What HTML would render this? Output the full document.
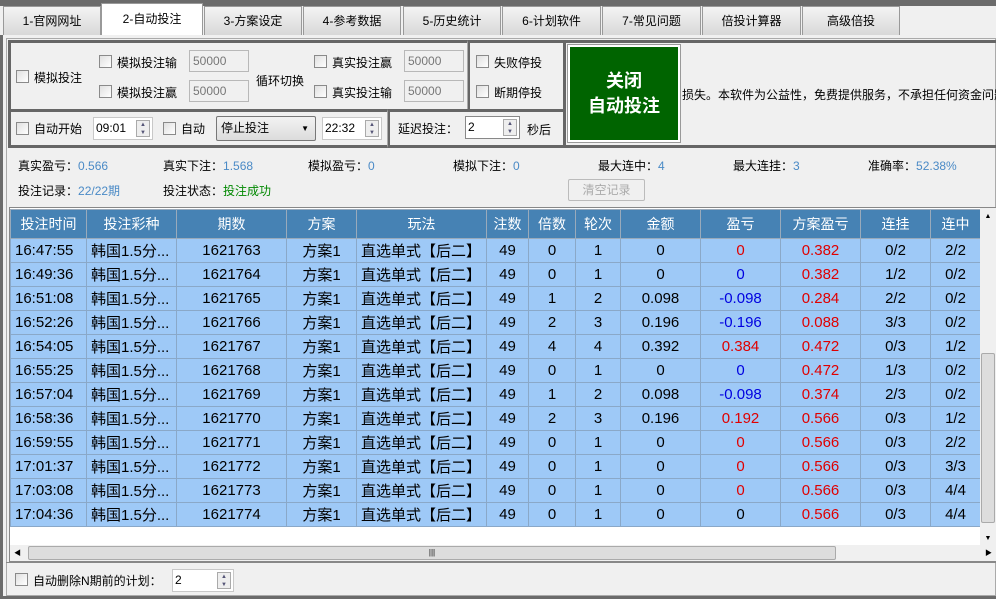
<!DOCTYPE html><html><head><meta charset="utf-8"><style>
*{margin:0;padding:0;box-sizing:border-box}
body{width:996px;height:599px;overflow:hidden;background:#f0f0f0;font-family:"Liberation Sans","Noto Sans CJK SC",sans-serif;font-size:12px;color:#000;position:relative}
.a{position:absolute}
.tab{position:absolute;top:6px;height:29px;background:linear-gradient(#f4f4f4,#d8d8d8);border:1px solid #999;border-bottom:none;text-align:center;line-height:28px;font-size:12px}
.cb{position:absolute;width:13px;height:13px;border:1px solid #8a8a8a;background:linear-gradient(135deg,#e0e0e0,#fff)}
.inp{position:absolute;height:22px;border:1px solid #b8b8b8;background:#f0f0f0;color:#777;line-height:20px;padding-left:3px;font-size:12px}
.box{position:absolute;border:3px solid #666}
.w{position:absolute;height:23px;border:1px solid #c8c8c8;background:#fff;line-height:21px;padding-left:2px}
.sp{position:absolute;right:2px;top:2px;width:14px;height:17px;border:1px solid #aaa;background:#eee;font-size:6px;line-height:8px;text-align:center;color:#557}
.blue{color:#4a8ac6}
table{position:absolute;left:10px;top:209px;border-collapse:collapse;table-layout:fixed}
td,th{border:1px solid #8aa8c8;height:24px;font-size:15px;text-align:center;white-space:nowrap;overflow:hidden;font-weight:normal}
th{background:#4682b4;color:#fff;height:29px;font-size:14px;border-color:#9ab}
td{background:#9ec9f7}
td:nth-child(1),td:nth-child(2),td:nth-child(5){text-align:left;padding-left:4px}
.r{color:#e00000}.b{color:#0000e0}
</style></head><body>
<div class="a" style="left:0;top:0;width:996px;height:6px;background:#6b6b6b"></div>
<div class="tab" style="left:3px;width:98px">1-官网网址</div>
<div class="tab" style="left:101px;width:102px;top:3px;height:33px;background:#fff;line-height:30px">2-自动投注</div>
<div class="tab" style="left:204px;width:98px">3-方案设定</div>
<div class="tab" style="left:303px;width:98px">4-参考数据</div>
<div class="tab" style="left:403px;width:98px">5-历史统计</div>
<div class="tab" style="left:502px;width:99px">6-计划软件</div>
<div class="tab" style="left:602px;width:99px">7-常见问题</div>
<div class="tab" style="left:702px;width:99px">倍投计算器</div>
<div class="tab" style="left:802px;width:98px">高级倍投</div>
<div class="a" style="left:0;top:35px;width:996px;height:564px;border-left:3px solid #6b6b6b;border-bottom:3px solid #6b6b6b;background:#f0f0f0"></div>
<div class="a" style="left:6px;top:38px;width:990px;height:558px;border:1px solid #aaa"></div>
<div class="box" style="left:8px;top:40px;width:462px;height:72px"></div>
<div class="box" style="left:467px;top:40px;width:99px;height:72px;border-left:1px solid #aaa"></div>
<div class="box" style="left:8px;top:109px;width:382px;height:39px"></div>
<div class="box" style="left:387px;top:109px;width:179px;height:39px;border-left:1px solid #aaa"></div>
<div class="box" style="left:563px;top:40px;width:433px;height:108px;border-right:none"></div>
<div class="cb" style="left:16px;top:70px"></div><div class="a" style="left:34px;top:69px">模拟投注</div>
<div class="cb" style="left:99px;top:55px"></div><div class="a" style="left:117px;top:54px">模拟投注输</div>
<div class="cb" style="left:99px;top:85px"></div><div class="a" style="left:117px;top:84px">模拟投注赢</div>
<div class="inp" style="left:189px;top:50px;width:60px">50000</div>
<div class="inp" style="left:189px;top:80px;width:60px">50000</div>
<div class="a" style="left:256px;top:72px">循环切换</div>
<div class="cb" style="left:314px;top:55px"></div><div class="a" style="left:332px;top:54px">真实投注赢</div>
<div class="cb" style="left:314px;top:85px"></div><div class="a" style="left:332px;top:84px">真实投注输</div>
<div class="inp" style="left:404px;top:50px;width:60px">50000</div>
<div class="inp" style="left:404px;top:80px;width:60px">50000</div>
<div class="cb" style="left:476px;top:55px"></div><div class="a" style="left:494px;top:54px">失败停投</div>
<div class="cb" style="left:476px;top:85px"></div><div class="a" style="left:494px;top:84px">断期停投</div>
<div class="cb" style="left:16px;top:122px"></div><div class="a" style="left:34px;top:120px">自动开始</div>
<div class="w" style="left:93px;top:117px;width:60px">09:01<div class="sp">▲<br>▼</div></div>
<div class="cb" style="left:163px;top:122px"></div><div class="a" style="left:181px;top:120px">自动</div>
<div class="a" style="left:216px;top:116px;width:100px;height:25px;border:1px solid #777;border-radius:2px;background:linear-gradient(#f2f2f2,#dcdcdc);line-height:23px;padding-left:4px">停止投注<span style="position:absolute;right:6px;font-size:8px">▼</span></div>
<div class="w" style="left:322px;top:117px;width:60px">22:32<div class="sp">▲<br>▼</div></div>
<div class="a" style="left:398px;top:120px">延迟投注：</div>
<div class="w" style="left:465px;top:116px;width:55px;border-color:#888">2<div class="sp">▲<br>▼</div></div>
<div class="a" style="left:527px;top:121px">秒后</div>
<div class="a" style="left:567px;top:44px;width:114px;height:99px;border:1px solid #999;background:#fff;padding:2px"><div style="width:108px;height:93px;background:#006400;color:#fff;font-size:18px;font-weight:bold;text-align:center;padding-top:22px;line-height:25px">关闭<br>自动投注</div></div>
<div class="a" style="left:682px;top:86px;white-space:nowrap">损失。本软件为公益性，免费提供服务，不承担任何资金问题</div>
<div class="a" style="left:18px;top:157px">真实盈亏：<span class="blue">0.566</span></div>
<div class="a" style="left:163px;top:157px">真实下注：<span class="blue">1.568</span></div>
<div class="a" style="left:308px;top:157px">模拟盈亏：<span class="blue">0</span></div>
<div class="a" style="left:453px;top:157px">模拟下注：<span class="blue">0</span></div>
<div class="a" style="left:598px;top:157px">最大连中：<span class="blue">4</span></div>
<div class="a" style="left:733px;top:157px">最大连挂：<span class="blue">3</span></div>
<div class="a" style="left:868px;top:157px">准确率：<span class="blue">52.38%</span></div>
<div class="a" style="left:18px;top:182px">投注记录：<span class="blue">22/22期</span></div>
<div class="a" style="left:163px;top:182px">投注状态：<span style="color:#080">投注成功</span></div>
<div class="a" style="left:568px;top:179px;width:77px;height:22px;border:1px solid #bbb;border-radius:2px;color:#aaa;text-align:center;line-height:20px">清空记录</div>
<div class="a" style="left:9px;top:207px;width:987px;height:355px;background:#fff;border:1px solid #888"></div>
<table>
<colgroup><col style="width:76px"><col style="width:90px"><col style="width:110px"><col style="width:70px"><col style="width:130px"><col style="width:42px"><col style="width:47px"><col style="width:45px"><col style="width:80px"><col style="width:80px"><col style="width:80px"><col style="width:70px"><col style="width:50px"></colgroup>
<tr><th>投注时间</th><th>投注彩种</th><th>期数</th><th>方案</th><th>玩法</th><th>注数</th><th>倍数</th><th>轮次</th><th>金额</th><th>盈亏</th><th>方案盈亏</th><th>连挂</th><th>连中</th></tr>
<tr><td>16:47:55</td><td>韩国1.5分...</td><td>1621763</td><td>方案1</td><td>直选单式【后二】</td><td>49</td><td>0</td><td>1</td><td>0</td><td class="r">0</td><td class="r">0.382</td><td>0/2</td><td>2/2</td></tr>
<tr><td>16:49:36</td><td>韩国1.5分...</td><td>1621764</td><td>方案1</td><td>直选单式【后二】</td><td>49</td><td>0</td><td>1</td><td>0</td><td class="b">0</td><td class="r">0.382</td><td>1/2</td><td>0/2</td></tr>
<tr><td>16:51:08</td><td>韩国1.5分...</td><td>1621765</td><td>方案1</td><td>直选单式【后二】</td><td>49</td><td>1</td><td>2</td><td>0.098</td><td class="b">-0.098</td><td class="r">0.284</td><td>2/2</td><td>0/2</td></tr>
<tr><td>16:52:26</td><td>韩国1.5分...</td><td>1621766</td><td>方案1</td><td>直选单式【后二】</td><td>49</td><td>2</td><td>3</td><td>0.196</td><td class="b">-0.196</td><td class="r">0.088</td><td>3/3</td><td>0/2</td></tr>
<tr><td>16:54:05</td><td>韩国1.5分...</td><td>1621767</td><td>方案1</td><td>直选单式【后二】</td><td>49</td><td>4</td><td>4</td><td>0.392</td><td class="r">0.384</td><td class="r">0.472</td><td>0/3</td><td>1/2</td></tr>
<tr><td>16:55:25</td><td>韩国1.5分...</td><td>1621768</td><td>方案1</td><td>直选单式【后二】</td><td>49</td><td>0</td><td>1</td><td>0</td><td class="b">0</td><td class="r">0.472</td><td>1/3</td><td>0/2</td></tr>
<tr><td>16:57:04</td><td>韩国1.5分...</td><td>1621769</td><td>方案1</td><td>直选单式【后二】</td><td>49</td><td>1</td><td>2</td><td>0.098</td><td class="b">-0.098</td><td class="r">0.374</td><td>2/3</td><td>0/2</td></tr>
<tr><td>16:58:36</td><td>韩国1.5分...</td><td>1621770</td><td>方案1</td><td>直选单式【后二】</td><td>49</td><td>2</td><td>3</td><td>0.196</td><td class="r">0.192</td><td class="r">0.566</td><td>0/3</td><td>1/2</td></tr>
<tr><td>16:59:55</td><td>韩国1.5分...</td><td>1621771</td><td>方案1</td><td>直选单式【后二】</td><td>49</td><td>0</td><td>1</td><td>0</td><td class="r">0</td><td class="r">0.566</td><td>0/3</td><td>2/2</td></tr>
<tr><td>17:01:37</td><td>韩国1.5分...</td><td>1621772</td><td>方案1</td><td>直选单式【后二】</td><td>49</td><td>0</td><td>1</td><td>0</td><td class="r">0</td><td class="r">0.566</td><td>0/3</td><td>3/3</td></tr>
<tr><td>17:03:08</td><td>韩国1.5分...</td><td>1621773</td><td>方案1</td><td>直选单式【后二】</td><td>49</td><td>0</td><td>1</td><td>0</td><td class="r">0</td><td class="r">0.566</td><td>0/3</td><td>4/4</td></tr>
<tr><td>17:04:36</td><td>韩国1.5分...</td><td>1621774</td><td>方案1</td><td>直选单式【后二】</td><td>49</td><td>0</td><td>1</td><td>0</td><td>0</td><td class="r">0.566</td><td>0/3</td><td>4/4</td></tr>
</table>
<div class="a" style="left:980px;top:208px;width:16px;height:337px;background:#f0f0f0"><div style="font-size:7px;text-align:center;margin-top:5px">▲</div><div class="a" style="left:1px;top:145px;width:14px;height:170px;background:#ddd;border:1px solid #aaa;border-radius:2px"></div><div class="a" style="left:0;bottom:3px;width:16px;font-size:7px;text-align:center">▼</div></div>
<div class="a" style="left:10px;top:545px;width:986px;height:16px;background:#f0f0f0"><div class="a" style="left:4px;top:3px;font-size:7px">◀</div><div class="a" style="left:18px;top:1px;width:808px;height:14px;background:#ddd;border:1px solid #aaa;border-radius:2px;text-align:center;font-size:8px;line-height:12px">|||</div><div class="a" style="right:4px;top:3px;font-size:7px">▶</div></div>
<div class="a" style="left:6px;top:562px;width:990px;height:1px;background:#888"></div>
<div class="cb" style="left:15px;top:573px"></div><div class="a" style="left:33px;top:572px">自动删除N期前的计划：</div>
<div class="w" style="left:172px;top:569px;width:62px;height:23px">2<div class="sp">▲<br>▼</div></div>
</body></html>
